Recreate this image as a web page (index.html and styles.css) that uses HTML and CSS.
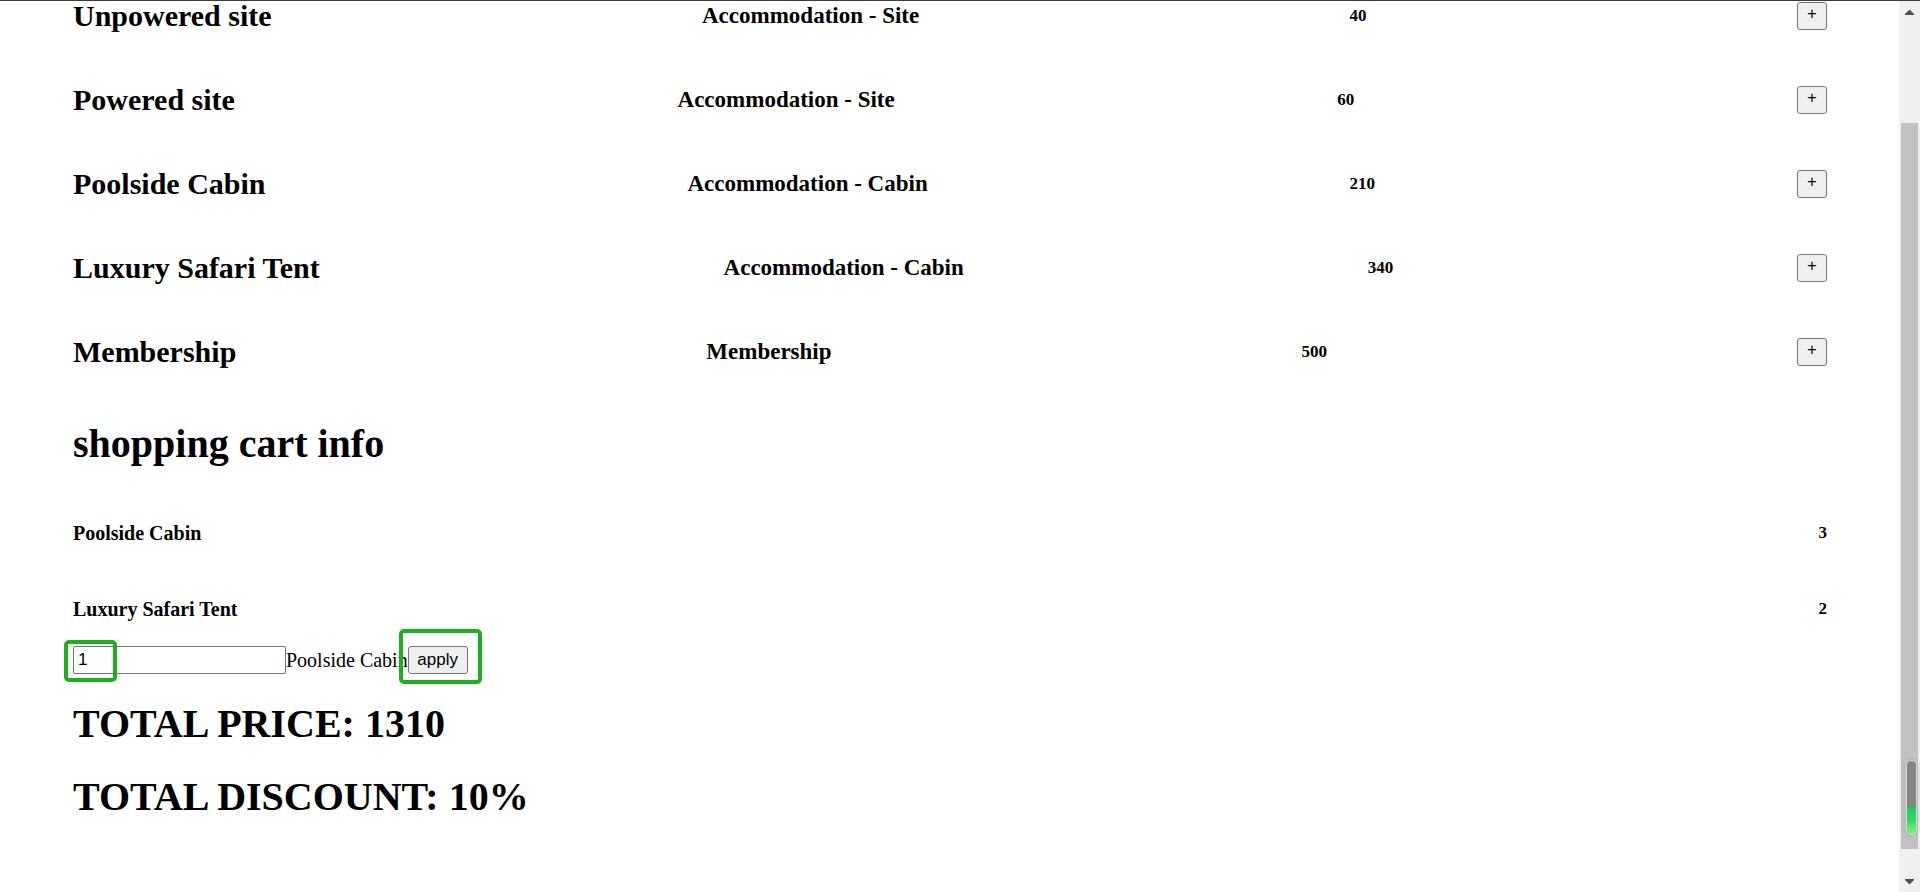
FILE: index.html
```html
<!DOCTYPE html>
<html lang="en">
<head>
<meta charset="utf-8">
<title>Shopping cart</title>
<link rel="stylesheet" href="styles.css">
</head>
<body>
<div class="page">
  <main class="content">
    <ul class="products">
      <li class="product"><h2>Unpowered site</h2><h3>Accommodation - Site</h3><h5>40</h5><button type="button" class="add" aria-label="Add Unpowered site">+</button></li>
      <li class="product"><h2>Powered site</h2><h3>Accommodation - Site</h3><h5>60</h5><button type="button" class="add" aria-label="Add Powered site">+</button></li>
      <li class="product"><h2>Poolside Cabin</h2><h3>Accommodation - Cabin</h3><h5>210</h5><button type="button" class="add" aria-label="Add Poolside Cabin">+</button></li>
      <li class="product"><h2>Luxury Safari Tent</h2><h3>Accommodation - Cabin</h3><h5>340</h5><button type="button" class="add" aria-label="Add Luxury Safari Tent">+</button></li>
      <li class="product"><h2>Membership</h2><h3>Membership</h3><h5>500</h5><button type="button" class="add" aria-label="Add Membership">+</button></li>
    </ul>
    <h1 class="cart-title">shopping cart info</h1>
    <ul class="cart">
      <li class="cart-row"><h4>Poolside Cabin</h4><h5>3</h5></li>
      <li class="cart-row"><h4>Luxury Safari Tent</h4><h5>2</h5></li>
    </ul>
    <form class="discount">
      <span class="marked marked-input"><input id="free" class="field" type="text" value="1"></span>
      <label for="free">Poolside Cabin</label>
      <span class="marked marked-button"><button type="button" class="apply">apply</button></span>
    </form>
    <h1 class="total">TOTAL PRICE: 1310</h1>
    <h1 class="total">TOTAL DISCOUNT: 10%</h1>
  </main>
  <div class="scrollbar" aria-hidden="true">
    <svg class="arrow" viewBox="0 0 9 5"><path d="M0 5V4L4 0H5L9 4V5Z"/></svg>
    <div class="track"><div class="thumb"><div class="gauge"><div class="level"></div></div></div></div>
    <svg class="arrow" viewBox="0 0 9 5"><path d="M0 0V1L4 5H5L9 1V0Z"/></svg>
  </div>
</div>
</body>
</html>
```
FILE: styles.css
```css
*, *::after { box-sizing: border-box; }
body {
  margin: 0;
  background: #fff;
  color: #000;
  font: 20px/24px "Liberation Serif", "Times New Roman", serif;
}
h1, h2, h3, h4, h5, ul { margin: 0; padding: 0; }
ul { list-style: none; }
.page {
  display: flex;
  min-height: 100vh;
  border-top: 1px solid #3c3a3c;
}
.content { flex: 1; padding: 0 72px 40px 73px; }

.products { display: flex; flex-direction: column; gap: 54px; }
.product, .cart-row {
  display: flex;
  align-items: center;
  justify-content: space-between;
}
h1 { font-size: 40px; line-height: 46px; }
h2 { font-size: 30px; line-height: 30px; }
h3 { font-size: 23px; line-height: 26px; }
h4 { font-size: 20px; line-height: 24px; }
h5 { font-size: 17px; line-height: 20px; }

button, .field {
  margin: 0;
  border: 1px solid #767676;
  border-radius: 3px;
  color: #000;
  font-family: "Liberation Sans", Arial, sans-serif;
}
button { background: #efefef; }
.add {
  width: 30px;
  height: 28px;
  padding: 0 0 4px;
  font-size: 16px;
  line-height: 20px;
}

.cart-title { margin-top: 54px; }
.cart { display: flex; flex-direction: column; gap: 52px; margin-top: 54px; }

.discount { display: flex; align-items: center; margin-top: 25px; }
.field {
  display: block;
  width: 213px;
  height: 28px;
  padding: 0 4px;
  background: #fff;
  border-radius: 2px;
  font-size: 17px;
}
.apply { display: block; width: 60px; height: 28px; padding: 0; font-size: 17px; }

/* green highlight frames around the quantity and the apply button */
.marked { position: relative; }
.marked::after {
  content: "";
  position: absolute;
  border: 4px solid #1cb01c;
  border-radius: 5px;
  pointer-events: none;
}
.marked-input::after { left: -9px; top: -6px; width: 53px; height: 42px; }
.marked-button::after { left: -9px; top: -17px; width: 83px; height: 55px; }

.total { margin-top: 27px; }

.scrollbar {
  display: flex;
  flex-direction: column;
  align-items: center;
  flex: 0 0 21px;
  padding: 9px 0 8px;
  background: #f0f0f0;
}
.arrow { display: block; width: 9px; height: 5px; fill: #505050; }
.track { flex: 1; display: flex; width: 17px; padding: 108px 0 30px; }
.thumb { position: relative; flex: 1; background: #c1c1c1; }
.gauge {
  position: absolute;
  right: 1px;
  bottom: 14px;
  width: 11px;
  height: 75px;
  border: 1px solid #d8d8d8;
  border-radius: 5px;
  background: #858585;
  display: flex;
  align-items: flex-end;
  overflow: hidden;
  box-shadow: 0 0 5px #b0b0b0;
}
.level {
  flex: 1;
  height: 28px;
  background: linear-gradient(#1fb65c, #24cc68 12%, #30d66c 50%, #80f57c);
}
```
